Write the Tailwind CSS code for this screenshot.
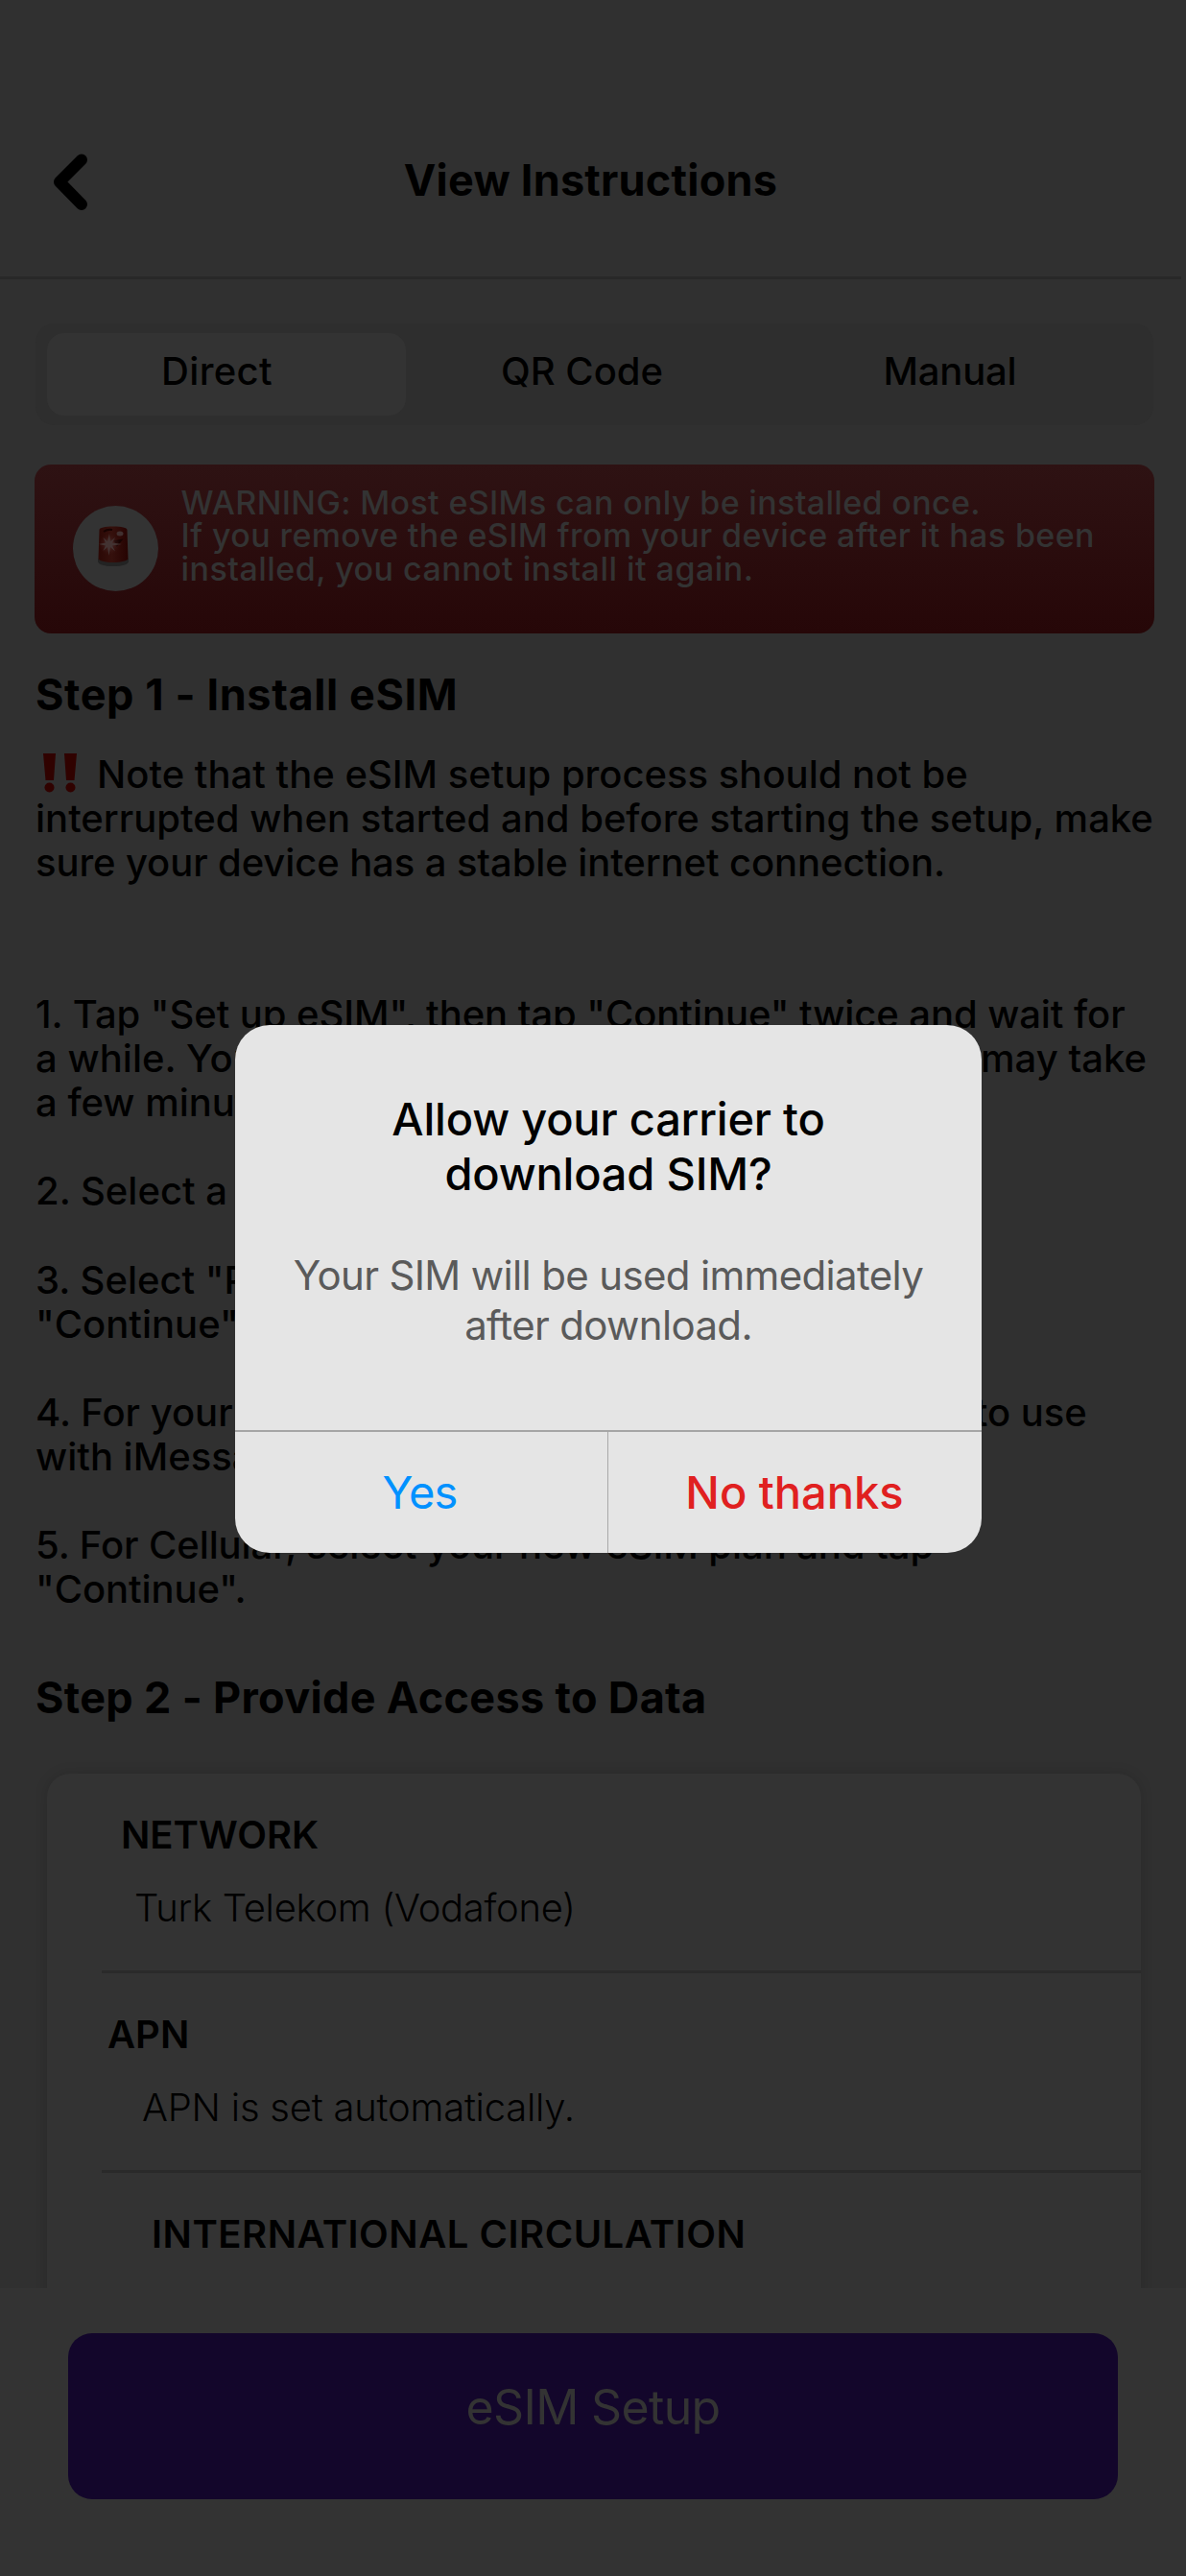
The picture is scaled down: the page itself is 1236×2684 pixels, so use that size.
<!DOCTYPE html>
<html lang="en">

<head>
    <meta charset="UTF-8" />
    <title>View Instructions</title>
    <script src="https://cdn.jsdelivr.net/npm/@tailwindcss/browser@4"></script>
</head>

<body class="bg-[#303030]">
    <div class="relative w-[1236px] h-[2684px] overflow-hidden flex flex-col bg-[#303030] text-black font-medium font-[Inter,sans-serif]">

        <!-- Header -->
        <header class="h-[291px] w-[1231px] shrink-0 flex items-start pt-[158px] pl-[55px] border-b-[3px] border-[#282828]">
            <svg class="w-[37px] h-[60px] mt-[2px]" viewBox="0 0 37 60" fill="none" stroke="currentColor"
                stroke-width="12" stroke-linecap="round" stroke-linejoin="round">
                <path d="M30 6.500L7 29.500L30 53" />
            </svg>
            <h1 class="flex-1 pr-[92px] text-center text-[45px] leading-[60px] font-bold tracking-[0.23px]">View Instructions</h1>
        </header>

        <main class="h-[2093px] shrink-0 overflow-hidden">
            <!-- Tabs -->
            <nav class="mt-[46px] ml-[37px] w-[1165px] h-[106px] rounded-[20px] bg-[#2e2e2e] flex items-center pl-[12px] text-[40px] leading-[46px]">
                <div class="w-[374px] h-[86px] rounded-[18px] bg-[#333333] flex items-center justify-center pr-[20px] pb-[6px] tracking-[0.35px]">Direct</div>
                <div class="w-[367px] text-center pb-[6px]">QR Code</div>
                <div class="w-[400px] text-center pb-[6px] tracking-[-0.2px]">Manual</div>
            </nav>

            <!-- Warning -->
            <div class="mt-[40.5px] ml-[36px] w-[1167px] h-[176px] rounded-[17px] bg-linear-to-b from-[#2e1213] to-[#260708] flex items-start pl-[40px]">
                <div class="w-[89px] h-[89px] shrink-0 mt-[43.5px] rounded-full bg-[#333333]">
                    <svg class="w-[89px] h-[89px]" viewBox="0 0 89 89">
                        <defs>
                            <linearGradient id="lamp" x1="0" x2="1">
                                <stop offset="0" stop-color="#2b0805" />
                                <stop offset="0.45" stop-color="#35100c" />
                                <stop offset="1" stop-color="#260302" />
                            </linearGradient>
                            <radialGradient id="flare">
                                <stop offset="0" stop-color="#4a3635" />
                                <stop offset="1" stop-color="#3a1412" stop-opacity="0" />
                            </radialGradient>
                        </defs>
                        <path d="M26 55v3c0 3 7 5 16 5s16-2 16-5v-3z" fill="#232323" />
                        <path d="M27.500 25c0-2 6-3.500 14.500-3.500s14.500 1.500 14.500 3.500l1 30c0 2-7 4-15.500 4s-15.500-2-15.500-4z" fill="url(#lamp)" />
                        <path d="M32 27q4-3 9-2M44 37l6-1-4 5z" stroke="#160302" stroke-width="2" fill="#160302" fill-opacity="0.500" />
                        <ellipse cx="49" cy="29" rx="3.500" ry="2.500" fill="#403030" />
                        <circle cx="38" cy="40" r="11" fill="url(#flare)" />
                        <path d="M38 29l1 8 5-4-3 5.500 10 1.500-10 1.500 3 6-5-4.500-1.500 9-1.500-9-4.500 4 2.500-5.500-7-1.500 7-1.500-2.500-5.500 4.500 4z" fill="#433332" />
                    </svg>
                </div>
                <p class="ml-[23.5px] pt-[23px] text-[34px] leading-[34.5px] tracking-[0.4px] text-[#333333] whitespace-nowrap">
                    <span class="tracking-[0.34px]">WARNING: Most eSIMs can only be installed once.</span><br>
                    If you remove the eSIM from your device after it has been<br>
                    <span class="tracking-[0.47px]">installed, you cannot install it again.</span>
                </p>
            </div>

            <!-- Step 1 -->
            <section class="ml-[37px] whitespace-nowrap">
                <h2 class="mt-[41.5px] text-[45px] leading-[46px] font-bold tracking-[0.6px]">Step 1 - Install eSIM</h2>
                <p class="mt-[36.5px] text-[40px] leading-[46px]">
                    <svg class="inline-block align-top w-[36px] h-[41px] ml-[8px] mr-[20px] mt-[1px]" viewBox="0 0 36 41" fill="#300200">
                        <path d="M0 0h13L11 28H2.500zM22 0h13l-2.500 28h-8.500z" />
                        <circle cx="6.500" cy="35.500" r="5" />
                        <circle cx="28.500" cy="35.500" r="5" />
                    </svg>Note that the eSIM setup process should not be<br>
                    interrupted when started and before starting the setup, make<br>
                    <span class="tracking-[-0.1px]">sure your device has a stable internet connection.</span>
                </p>
                <div class="mt-[112.5px] flex flex-col gap-[46px] text-[40px] leading-[46.15px]">
                    <p>
                        <span class="tracking-[-0.07px]">1. Tap "Set up eSIM", then tap "Continue" twice and wait for</span><br>
                        <span class="tracking-[0.05px]">a while. Your eSIM will connect to the network, this may take</span><br>
                        a few minutes.
                    </p>
                    <p>2. Select a label for your new plan.</p>
                    <p>3. Select "Primary" for your default line, tap<br>"Continue".</p>
                    <p>4. For your default line, choose a number you want to use<br>with iMessage and FaceTime.</p>
                    <p class="tracking-[-0.08px]">5. For Cellular, select your new eSIM plan and tap<br>"Continue".</p>
                </div>
            </section>

            <!-- Step 2 -->
            <section>
                <h2 class="mt-[66.5px] ml-[37px] text-[45px] leading-[46px] font-bold tracking-[0.33px]">Step 2 - Provide Access to Data</h2>
                <div class="mt-[55.5px] ml-[49px] w-[1140px] h-[620px] rounded-[24px] bg-[#333333] shadow-[0_0_14px_rgba(0,0,0,0.14)] pl-[57px] text-[40px] leading-[46px]">
                    <div class="h-[208px] pt-[41px] border-b-[3px] border-[#2a2a2a]">
                        <h3 class="ml-[20px] font-semibold">NETWORK</h3>
                        <p class="mt-[30.5px] ml-[34px] font-light tracking-[-0.3px]">Turk Telekom (Vodafone)</p>
                    </div>
                    <div class="h-[208px] pt-[41px] border-b-[3px] border-[#2a2a2a]">
                        <h3 class="ml-[6px] font-semibold">APN</h3>
                        <p class="mt-[30.5px] ml-[42px] font-light tracking-[-0.22px]">APN is set automatically.</p>
                    </div>
                    <div class="pt-[41px]">
                        <h3 class="ml-[52px] font-semibold tracking-[0.5px]">INTERNATIONAL CIRCULATION</h3>
                    </div>
                </div>
            </section>
        </main>

        <!-- Bottom button -->
        <footer class="h-[300px] shrink-0 bg-[#333333] pt-[46.5px] pl-[71px]">
            <button class="w-[1094px] h-[173px] pb-[18px] rounded-[25px] bg-[#13062b] text-[#333333] text-[50px] font-normal tracking-[-0.67px]">eSIM Setup</button>
        </footer>

        <!-- Dialog -->
        <div class="absolute left-[245px] top-[1068px] w-[778px] h-[550px] rounded-[36px] overflow-hidden bg-[#e5e5e5] flex flex-col text-center">
            <div class="h-[422px] shrink-0">
                <h2 class="pt-[68.5px] text-[47px] leading-[57.4px] tracking-[-0.2px]">Allow your carrier to<br>download SIM?</h2>
                <p class="mt-[52px] text-[42px] leading-[52px] font-normal tracking-[-0.66px] text-[#5a5a5a]">Your SIM will be used immediately<br>after download.</p>
            </div>
            <div class="flex-1 flex border-t-2 border-[#a5a5a5] text-[47px]">
                <button class="w-[389px] pr-[3px] font-normal tracking-[-0.8px] text-[#0091ff] border-r border-[#a8a8a8]">Yes</button>
                <button class="flex-1 pr-[1px] text-[#e02020]">No thanks</button>
            </div>
        </div>
    </div>
</body>

</html>
